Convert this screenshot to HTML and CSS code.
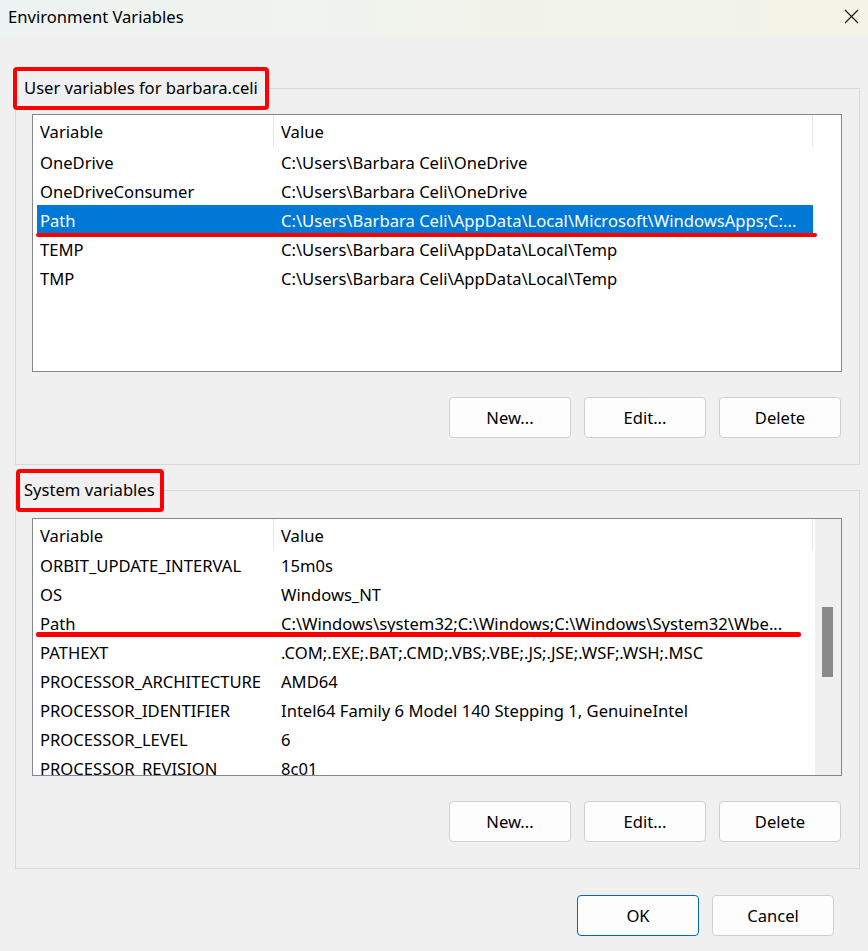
FILE: index.html
```html
<!DOCTYPE html>
<html lang="en">
<head>
    <meta charset="UTF-8">
    <meta name="viewport" content="width=device-width, initial-scale=1.0">
    <title>Environment Variables</title>
    <link rel="stylesheet" href="styles.css">
</head>
<body>
    <div class="titlebar">
        <span class="title">Environment Variables</span>
        <svg class="close" viewBox="0 0 15 15"><path d="M1 1L14 14M14 1L1 14"/></svg>
    </div>

    <div class="content">
        <!-- User variables -->
        <fieldset class="group">
            <legend class="legend legend-user">User variables for barbara.celi</legend>
            <div class="group-body">
                <div class="list">
                    <div class="rows">
                        <div class="row head"><div class="cell">Variable</div><div class="cell">Value</div></div>
                        <div class="row"><div class="cell">OneDrive</div><div class="cell">C:\Users\Barbara Celi\OneDrive</div></div>
                        <div class="row"><div class="cell">OneDriveConsumer</div><div class="cell">C:\Users\Barbara Celi\OneDrive</div></div>
                        <div class="row selected marked"><div class="cell">Path</div><div class="cell">C:\Users\Barbara Celi\AppData\Local\Microsoft\WindowsApps;C:...</div></div>
                        <div class="row"><div class="cell">TEMP</div><div class="cell">C:\Users\Barbara Celi\AppData\Local\Temp</div></div>
                        <div class="row"><div class="cell">TMP</div><div class="cell">C:\Users\Barbara Celi\AppData\Local\Temp</div></div>
                    </div>
                </div>
                <div class="buttons">
                    <button class="btn">New...</button>
                    <button class="btn">Edit...</button>
                    <button class="btn">Delete</button>
                </div>
            </div>
        </fieldset>

        <!-- System variables -->
        <fieldset class="group group-system">
            <legend class="legend legend-system">System variables</legend>
            <div class="group-body">
                <div class="list">
                    <div class="rows">
                        <div class="row head"><div class="cell">Variable</div><div class="cell">Value</div></div>
                        <div class="row"><div class="cell">ORBIT_UPDATE_INTERVAL</div><div class="cell">15m0s</div></div>
                        <div class="row"><div class="cell">OS</div><div class="cell">Windows_NT</div></div>
                        <div class="row marked marked-short"><div class="cell">Path</div><div class="cell">C:\Windows\system32;C:\Windows;C:\Windows\System32\Wbe...</div></div>
                        <div class="row"><div class="cell">PATHEXT</div><div class="cell">.COM;.EXE;.BAT;.CMD;.VBS;.VBE;.JS;.JSE;.WSF;.WSH;.MSC</div></div>
                        <div class="row"><div class="cell">PROCESSOR_ARCHITECTURE</div><div class="cell">AMD64</div></div>
                        <div class="row"><div class="cell">PROCESSOR_IDENTIFIER</div><div class="cell">Intel64 Family 6 Model 140 Stepping 1, GenuineIntel</div></div>
                        <div class="row"><div class="cell">PROCESSOR_LEVEL</div><div class="cell">6</div></div>
                        <div class="row"><div class="cell">PROCESSOR_REVISION</div><div class="cell">8c01</div></div>
                    </div>
                    <div class="scrollbar"><div class="thumb"></div></div>
                </div>
                <div class="buttons">
                    <button class="btn">New...</button>
                    <button class="btn">Edit...</button>
                    <button class="btn">Delete</button>
                </div>
            </div>
        </fieldset>

        <div class="dialog-buttons">
            <button class="btn btn-default">OK</button>
            <button class="btn">Cancel</button>
        </div>
    </div>
</body>
</html>
```

FILE: styles.css
```css
* {
    margin: 0;
    padding: 0;
    box-sizing: border-box;
}

body {
    width: 868px;
    height: 951px;
    overflow: hidden;
    background: #f0f0f0;
    font-family: "Segoe UI", "Noto Sans", sans-serif;
    font-size: 16.6px;
    color: #000;
}

.titlebar {
    height: 36px;
    display: flex;
    align-items: center;
    justify-content: space-between;
    padding: 0 9px 3px 8px;
    background: linear-gradient(90deg, #edf3f2 0%, #f1f3ec 50%, #f3f3e7 100%);
}

.close {
    width: 15px;
    height: 15px;
    fill: none;
    stroke: #1a1a1a;
    stroke-width: 1.2;
}

.content {
    padding: 31px 8px 0 15px;
}

.group {
    border: 1px solid #dadada;
    min-width: 0;
}

.group + .group {
    margin-top: 4px;
}

/* red annotation boxes around the group titles */
.legend {
    height: 43px;
    line-height: 34px;
    border: 4px solid #ff0000;
    border-radius: 4px;
}

.legend-user {
    margin-left: -3px;
    padding: 0 7px;
}

.legend-system {
    margin-left: 0;
    padding: 0 5px 0 4px;
}

.group-body {
    padding: 4px 17px 26px 16px;
}

.group-system .group-body {
    padding-top: 6px;
}

.list {
    height: 258px;
    display: flex;
    overflow: hidden;
    background: #fff;
    border: 1px solid #828790;
}

.rows {
    flex: 1;
    padding-left: 4px;
}

.row {
    position: relative;
    display: grid;
    grid-template-columns: 237px 539px;
    width: max-content;
    height: 29px;
    line-height: 27px;
    white-space: nowrap;
}

.row.head {
    height: 32px;
    line-height: 30px;
}

.group-system .row.head {
    height: 31px;
    line-height: 29px;
}

.cell {
    overflow: hidden;
    padding: 2px 0 0 3px;
}

.cell + .cell {
    padding-left: 7px;
}

.head .cell {
    border-right: 1px solid #e5e5e5;
}

.row.selected {
    background: #0078d7;
    color: #fff;
}

.row.marked::after {
    content: "";
    position: absolute;
    left: -1px;
    right: -4px;
    bottom: -3px;
    height: 4px;
    background: #ff0000;
    border-radius: 2px;
}

.row.marked-short::after {
    right: 12px;
    bottom: 0;
    height: 5px;
}

.scrollbar {
    width: 26px;
    display: flex;
    justify-content: center;
    padding: 88px 1px 0 0;
    background: #f0f0f0;
}

.thumb {
    width: 11px;
    height: 70px;
    background: #8a8a8a;
}

.buttons {
    display: flex;
    justify-content: flex-end;
    gap: 13px;
    margin: 25px 1px 0 0;
}

.btn {
    width: 122px;
    height: 41px;
    font: inherit;
    color: #000;
    background: #fdfdfd;
    border: 1px solid #d0d0d0;
    border-radius: 4px;
}

.btn-default {
    border-color: #0067c0;
}

.dialog-buttons {
    display: flex;
    justify-content: flex-end;
    gap: 13px;
    margin-top: 26px;
    padding-right: 26px;
}
```
